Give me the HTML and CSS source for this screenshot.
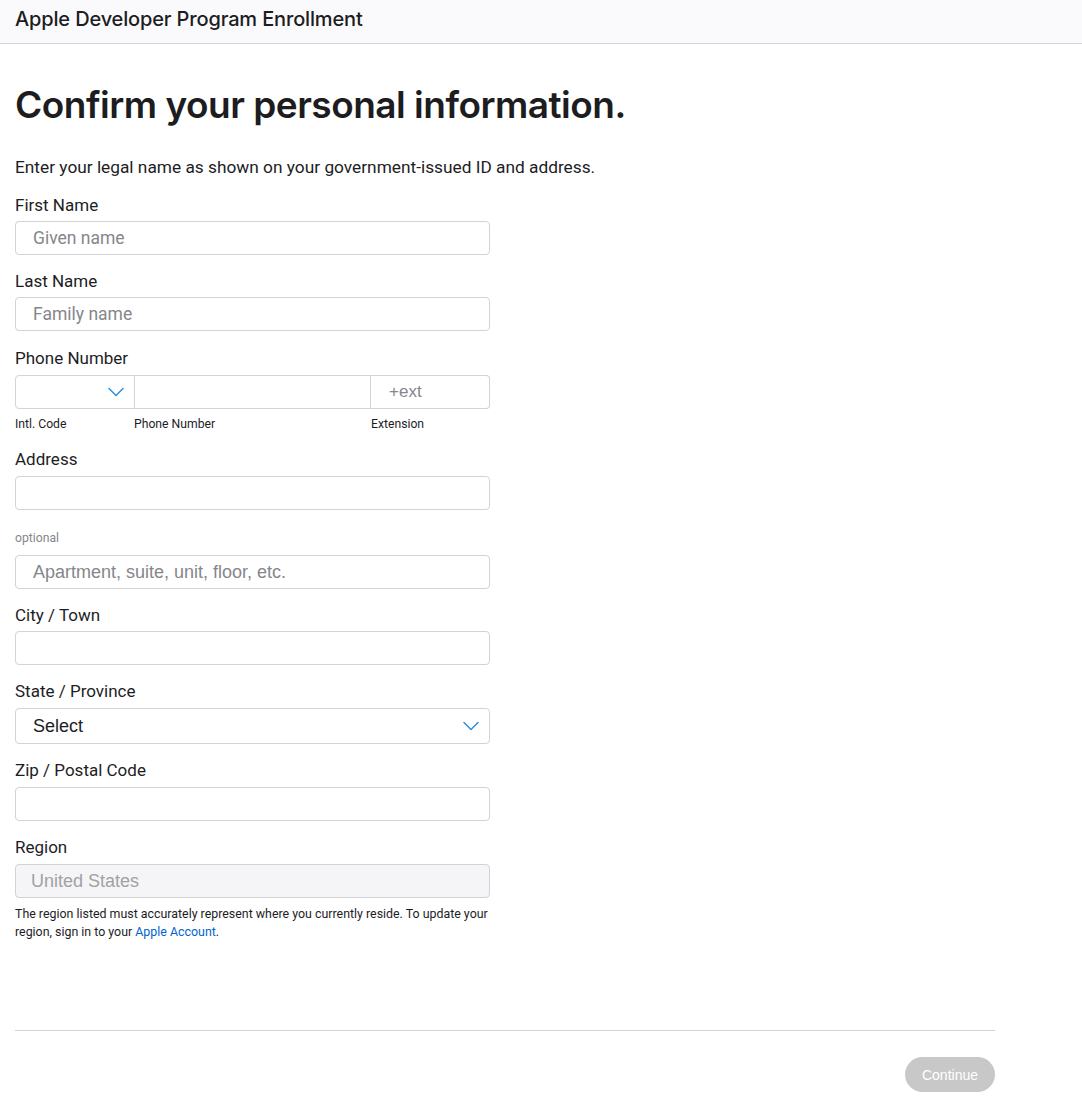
FILE: index.html
```html
<!DOCTYPE html>
<html lang="en">
<head>
<meta charset="utf-8">
<title>Apple Developer Program Enrollment</title>
<link rel="stylesheet" href="styles.css">
</head>
<body>
<header class="topbar">
  <div class="topbar-title">Apple Developer Program Enrollment</div>
</header>
<main class="page">
  <h1 class="headline">Confirm your personal information.</h1>
  <p class="intro">Enter your legal name as shown on your government-issued ID and address.</p>

  <form class="form">
    <div class="field">
      <label class="label">First Name</label>
      <div class="input input-roboto"><span class="ph">Given name</span></div>
    </div>
    <div class="field">
      <label class="label">Last Name</label>
      <div class="input input-roboto"><span class="ph">Family name</span></div>
    </div>
    <div class="field field-phone">
      <label class="label label-phone">Phone Number</label>
      <div class="phone">
        <div class="phone-code">
          <svg class="chev" width="16" height="10" viewBox="0 0 16 10"><path d="M1 1.5 L8 8.5 L15 1.5" fill="none" stroke="#2e8fd9" stroke-width="1.5" stroke-linecap="round" stroke-linejoin="round"/></svg>
        </div>
        <div class="phone-num"></div>
        <div class="phone-ext"><span class="ph">+ext</span></div>
      </div>
      <div class="phone-sub">
        <span class="sub sub-code">Intl. Code</span>
        <span class="sub sub-num">Phone Number</span>
        <span class="sub sub-ext">Extension</span>
      </div>
    </div>
    <div class="field field-addr">
      <label class="label label-addr">Address</label>
      <div class="input"></div>
    </div>
    <div class="field field-opt">
      <label class="label label-small">optional</label>
      <div class="input"><span class="ph">Apartment, suite, unit, floor, etc.</span></div>
    </div>
    <div class="field">
      <label class="label">City / Town</label>
      <div class="input"></div>
    </div>
    <div class="field field-state">
      <label class="label label-state">State / Province</label>
      <div class="input select"><span class="sel-text">Select</span>
        <svg class="chev" width="16" height="10" viewBox="0 0 16 10"><path d="M1 1.5 L8 8.5 L15 1.5" fill="none" stroke="#2e8fd9" stroke-width="1.5" stroke-linecap="round" stroke-linejoin="round"/></svg>
      </div>
    </div>
    <div class="field field-zip">
      <label class="label label-zip">Zip / Postal Code</label>
      <div class="input"></div>
    </div>
    <div class="field field-region">
      <label class="label label-region">Region</label>
      <div class="input disabled"><span class="dis-text">United States</span></div>
      <p class="note">The region listed must accurately represent where you currently reside. To update your region, sign in to your <a class="link" href="#">Apple Account</a>.</p>
    </div>
  </form>

  <div class="footer">
    <button class="btn" type="button">Continue</button>
  </div>
</main>
</body>
</html>
```
FILE: styles.css
```css
* { box-sizing: border-box; }
html, body { margin: 0; padding: 0; background: #fff; }
body { font-family: Roboto, "Liberation Sans", sans-serif; color: #1d1d1f; }

.topbar {
  height: 44px;
  background: #fafafc;
  border-bottom: 1px solid #d2d2d7;
  display: flex;
  align-items: center;
  padding: 0 15px 6px;
}
.topbar-title {
  font-family: Inter, sans-serif;
  font-size: 20px;
  line-height: 24px;
  font-weight: 500;
  color: #1d1d1f;
  letter-spacing: -0.15px;
}

.page { padding: 0 15px; width: 1010px; }

.headline {
  font-family: Inter, sans-serif;
  font-weight: 600;
  font-size: 37px;
  line-height: 46px;
  letter-spacing: -0.5px;
  margin: 38px 0 0;
  color: #1d1d1f;
}
.intro {
  font-size: 17.3px;
  line-height: 22px;
  margin: 28px 0 0;
  color: #1d1d1f;
}

.form { width: 475px; margin-top: 16px; display: flex; flex-direction: column; }
.field { display: flex; flex-direction: column; margin-bottom: 15px; }
.label { font-size: 17px; line-height: 22px; margin-bottom: 5px; color: #1d1d1f; }
.label-phone { margin-top: 1px; margin-bottom: 6px; }
.label-addr { margin-bottom: 6px; }
.label-state { margin-bottom: 6px; }
.label-zip { margin-bottom: 6px; }
.label-region { margin-bottom: 6px; }
.label-small { font-size: 12.2px; line-height: 16px; color: #86868b; margin-bottom: 9px; }
.field-phone { margin-bottom: 16px; }
.field-addr { margin-bottom: 20px; }
.field-opt { margin-bottom: 15px; }
.field-state { margin-bottom: 15px; }
.field-zip { margin-bottom: 15px; }

.input {
  height: 34px;
  border: 1px solid #d2d2d7;
  border-radius: 4px;
  background: #fff;
  display: flex;
  align-items: center;
  padding: 0 17px;
  font-family: "Liberation Sans", Arial, sans-serif;
  font-size: 18px;
}
.input-roboto { font-family: Roboto, "Liberation Sans", sans-serif; font-size: 17.5px; }
.ph { color: #86868b; }
.select { height: 36px; justify-content: space-between; padding-right: 10px; }
.sel-text { color: #1d1d1f; }
.disabled { background: #f5f5f7; }
.dis-text { color: #a1a1a6; margin-left: -2px; }

.phone { display: flex; height: 34px; }
.phone > div { border: 1px solid #d2d2d7; height: 34px; display: flex; align-items: center; font-family: "Liberation Sans", Arial, sans-serif; font-size: 17px; }
.phone-code { width: 120px; border-radius: 4px 0 0 4px; justify-content: flex-end; padding-right: 10px; }
.phone-num { width: 236px; border-left: none !important; }
.phone-ext { width: 119px; border-left: none !important; border-radius: 0 4px 4px 0; padding-left: 18px; }
.phone-sub { display: flex; margin-top: 7px; font-size: 12.2px; line-height: 16px; color: #1d1d1f; }
.sub-code { width: 119px; }
.sub-num { width: 237px; }

.note { font-size: 12.4px; line-height: 18px; margin: 7px 0 0; color: #1d1d1f; }
.link { color: #0066cc; text-decoration: none; }

.footer {
  margin-top: 74px;
  width: 980px;
  border-top: 1px solid #d2d2d7;
  display: flex;
  justify-content: flex-end;
  padding-top: 26px;
}
.btn {
  height: 35px;
  width: 90px;
  border: none;
  border-radius: 18px;
  background: #c8c8c8;
  color: #fff;
  font-family: "Liberation Sans", Arial, sans-serif;
  font-size: 14px;
  padding: 0;
}
```
